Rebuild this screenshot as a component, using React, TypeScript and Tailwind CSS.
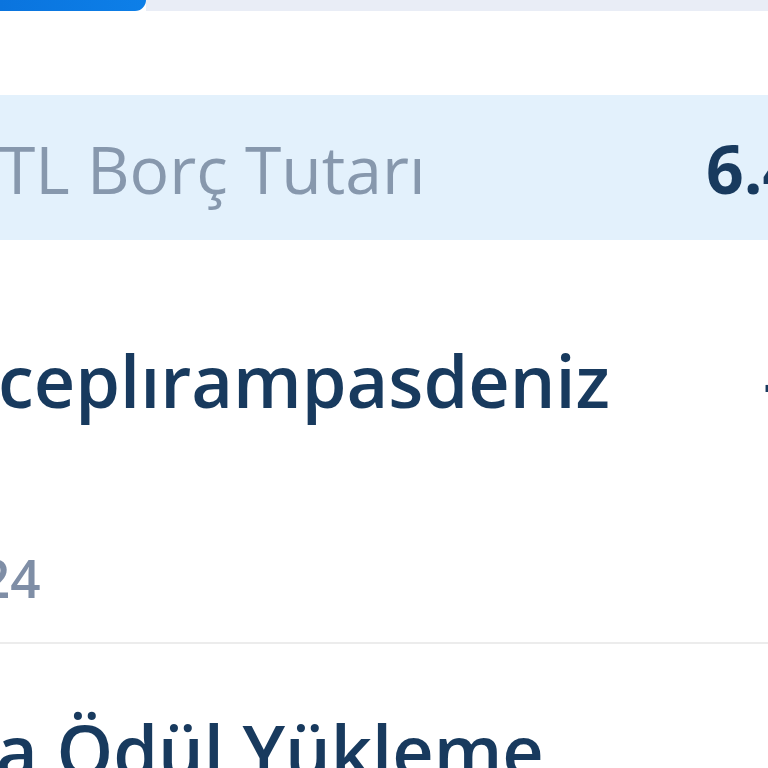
export default function App() {
  return (
    <div className="w-[768px] h-[768px] overflow-hidden bg-white font-['Open_Sans',sans-serif] whitespace-nowrap">
      <div className="flex h-[11px]">
        <div className="w-[146px] bg-gradient-to-r from-[#0a74de] to-[#0d7fe8] rounded-br-[14px]" />
        <div className="flex-1 bg-[#e9edf6]" />
      </div>

      <div className="mt-[84px] h-[145px] bg-[#e3f1fc] flex items-center">
        <span className="w-[707px] shrink-0 text-[66px] leading-none text-[#8798ad] -ml-[1px]">
          TL Borç Tutarı
        </span>
        <span className="text-[66px] leading-none font-bold text-[#183a5e]">6.400,00 TL</span>
      </div>

      <div className="mt-[104px] flex">
        <span className="w-[765px] shrink-0 text-[72px] leading-none font-semibold text-[#183a5e] -ml-[2px]">
          ceplırampasdeniz
        </span>
        <span className="text-[72px] leading-none font-semibold text-[#183a5e]">-100,00 TL</span>
      </div>

      <div className="mt-[135px] -ml-[20px] text-[53px] leading-none font-semibold text-[#7f8ea6]">24</div>

      <div className="mt-[38px] h-[2px] bg-[#ececec]" />

      <div className="mt-[70px] -ml-[4px] text-[72px] leading-none font-semibold text-[#183a5e]">
        a Ödül Yükleme
      </div>
    </div>
  );
}
